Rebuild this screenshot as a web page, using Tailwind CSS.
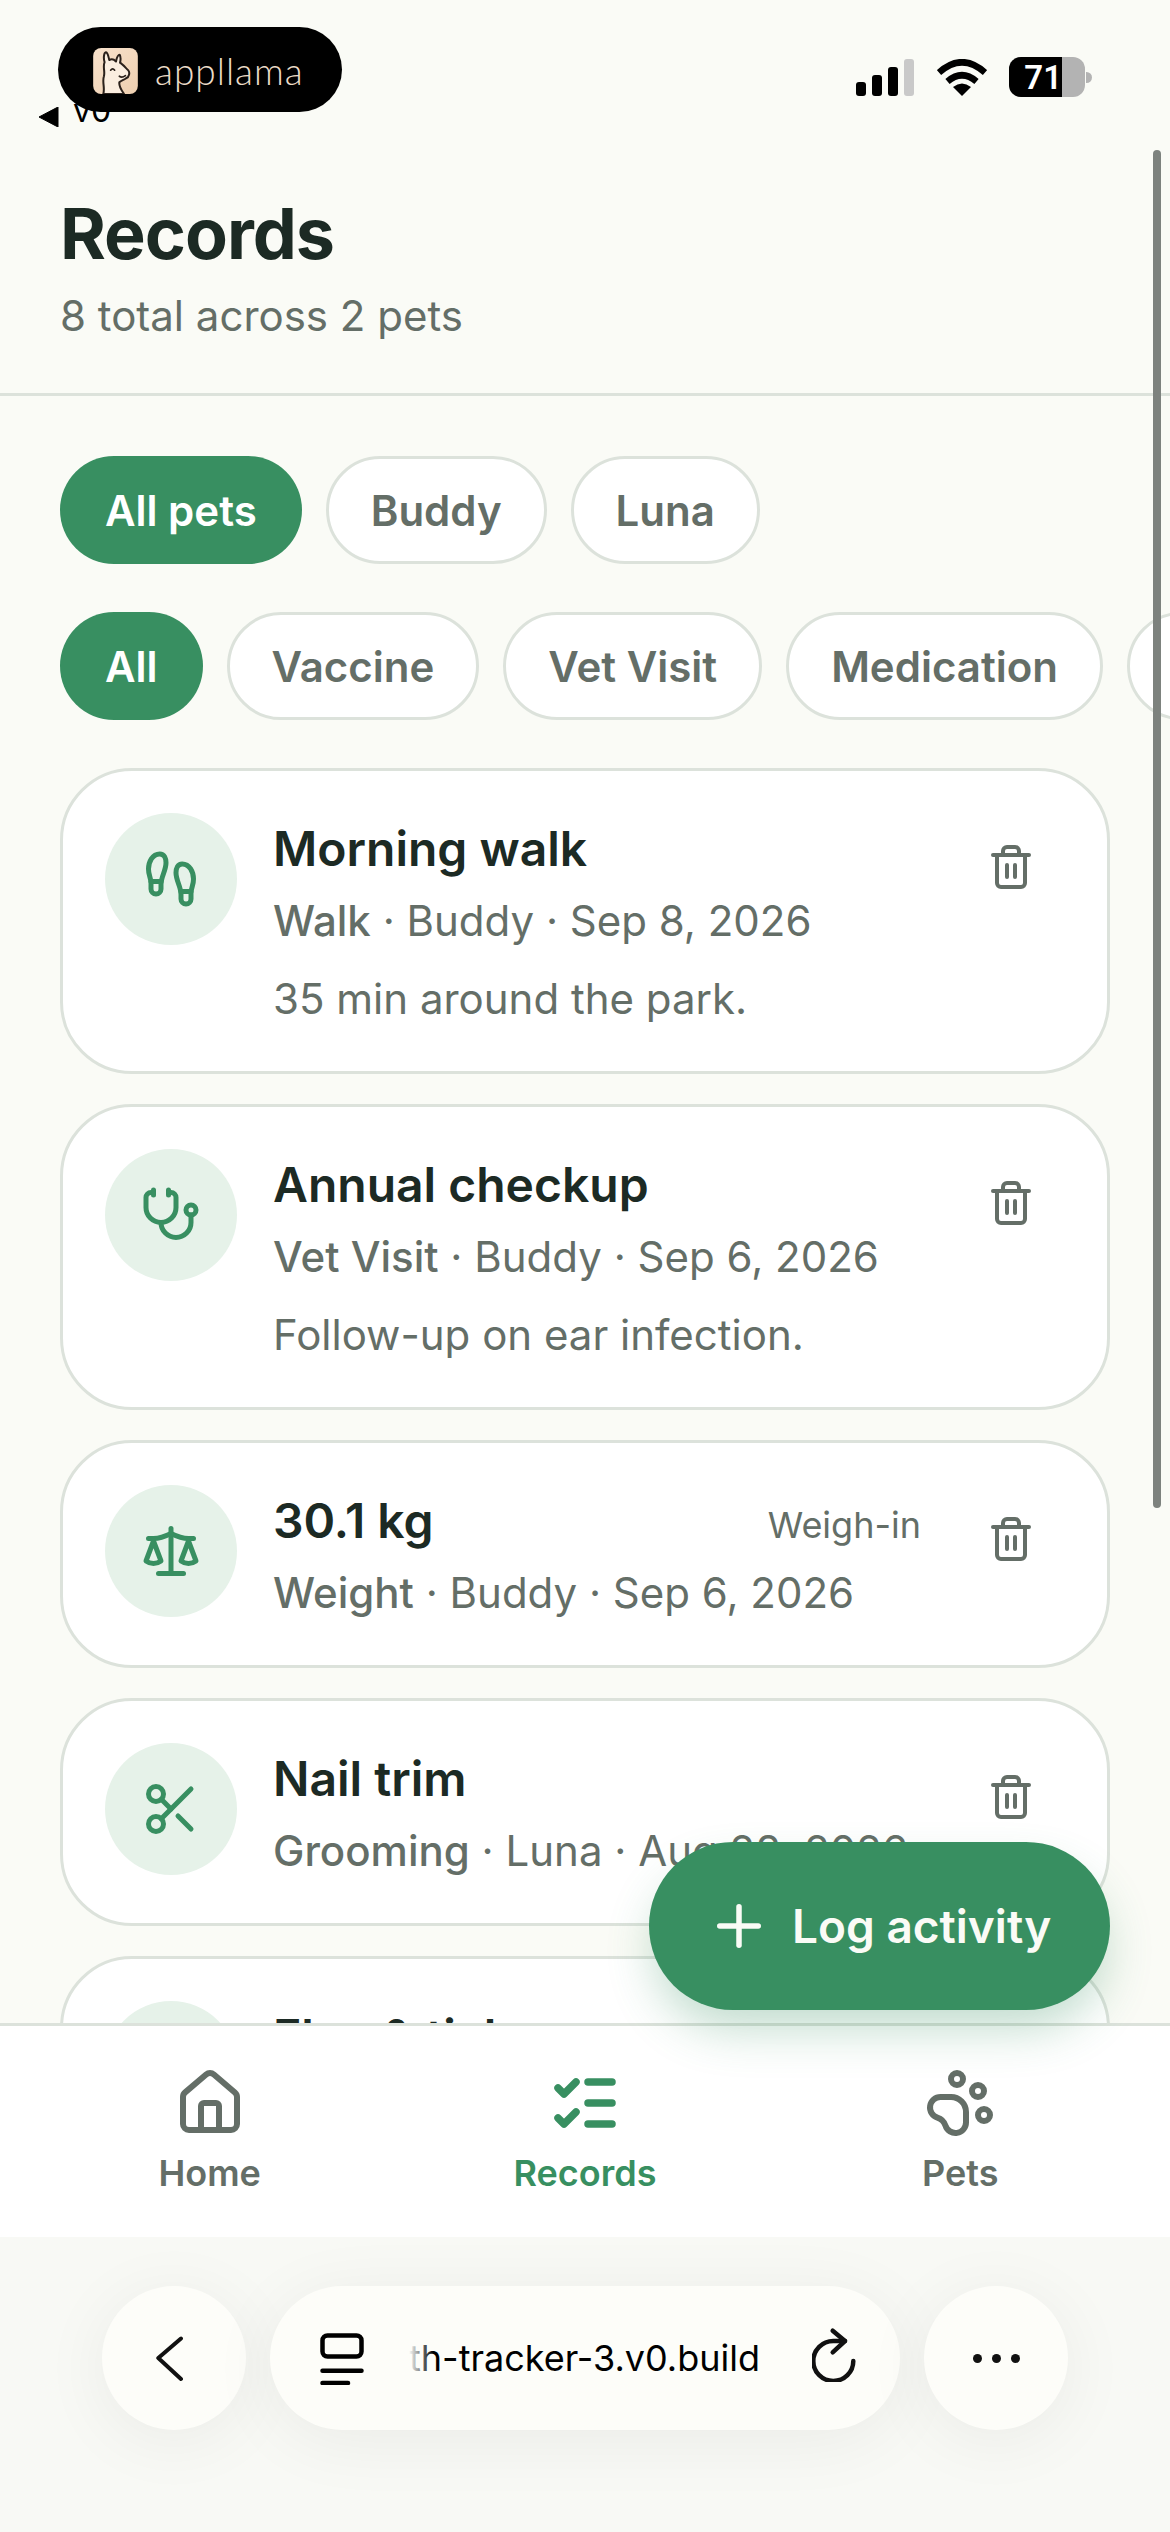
<!DOCTYPE html>
<html lang="en">
<head>
    <meta charset="UTF-8">
    <meta name="viewport" content="width=device-width, initial-scale=1.0">
    <title>Records</title>
    <script src="https://cdn.jsdelivr.net/npm/@tailwindcss/browser@4"></script>
</head>
<body class="bg-[#fafbf6]">

<svg class="hidden">
    <symbol id="trash" viewBox="0 0 24 24" fill="none" stroke="currentColor" stroke-width="2" stroke-linecap="round" stroke-linejoin="round">
        <path d="M3 6h18"/><path d="M19 6v14a2 2 0 0 1-2 2H7a2 2 0 0 1-2-2V6"/><path d="M8 6V4a2 2 0 0 1 2-2h4a2 2 0 0 1 2 2v2"/><path d="M10 11v6"/><path d="M14 11v6"/>
    </symbol>
</svg>

<div class="relative w-[1170px] h-[2532px] overflow-hidden flex flex-col bg-[#fafbf6] font-[Inter,sans-serif] text-[#1c2a24]">

    <!-- Header -->
    <header class="h-[396px] shrink-0 border-b-[3px] border-[#dce2db] flex flex-col">
        <div class="relative flex justify-between items-start pt-[27px] pl-[58px] pr-[78px]">
            <!-- v0 back link, mostly covered by the badge -->
            <div class="absolute left-[38px] top-[90px] flex items-center gap-[14px] text-black">
                <svg class="w-[21px] h-[20px] mt-[12px]" viewBox="0 0 21 20"><path d="M20 0v20L1 10z" fill="currentColor" stroke="currentColor" stroke-linejoin="round"/></svg>
                <span class="text-[32px] leading-[42px]">v0</span>
            </div>
            <!-- appllama badge -->
            <div class="relative w-[284px] h-[85px] rounded-full bg-black flex items-center pl-[35px] gap-[17px]">
                <svg class="w-[45px] h-[46px] mt-[2px]" viewBox="0 0 133 137">
                    <defs><linearGradient id="peach" x1="0" y1="0" x2="1" y2="1"><stop offset="0" stop-color="#f8e2cc"/><stop offset="1" stop-color="#eecfb0"/></linearGradient></defs>
                    <rect width="133" height="137" rx="24" fill="url(#peach)"/>
                    <path d="M30 137C36 118 26 102 32 84C36 70 28 56 34 42C30 30 32 14 38 13C44 14 46 28 48 36Q58 30 68 40C70 30 74 20 79 20C82 26 82 36 80 44C85 46 94 56 104 66C110 72 108 86 98 90C90 96 84 96 78 102C76 115 84 125 92 137Z" fill="#fbeee0" stroke="#2b211b" stroke-width="6" stroke-linejoin="round"/>
                    <path d="M52 66Q58 58 64 66M78 84Q86 90 96 82" fill="none" stroke="#2b211b" stroke-width="5" stroke-linecap="round"/>
                </svg>
                <span class="text-[#ecdcc8] text-[37px] leading-none font-[Lato,sans-serif] font-light tracking-[1px] mt-[2px]">appllama</span>
            </div>
            <!-- Status icons -->
            <div class="flex items-center h-[40px] mt-[30px]">
                <div class="flex items-end gap-[6px] h-[37px] mr-[23px]">
                    <span class="w-[10px] h-[14px] rounded-[3px] bg-black"></span>
                    <span class="w-[10px] h-[21px] rounded-[3px] bg-black"></span>
                    <span class="w-[10px] h-[29px] rounded-[3px] bg-black"></span>
                    <span class="w-[10px] h-[37px] rounded-[3px] bg-[#c9c9c9]"></span>
                </div>
                <svg class="w-[50px] h-[37px] mr-[22px]" viewBox="0 0 50 37" fill="none" stroke="black" stroke-width="6.5">
                    <path d="M2 13.5Q25 -7 48 13.5"/><path d="M10.5 22.5Q25 10 39.5 22.5"/><path d="M25 37L16 28Q25 21 34 28Z" fill="black" stroke="none"/>
                </svg>
                <div class="flex w-[76px] h-[40px] rounded-[12px] overflow-hidden bg-[#b3b3b3]">
                    <div class="w-[53px] bg-black flex justify-end items-center overflow-hidden">
                        <span class="text-white text-[33px] font-semibold leading-none font-[Roboto,sans-serif]">71</span>
                    </div>
                </div>
                <span class="w-[6px] h-[11px] rounded-r-full bg-[#b3b3b3] ml-[1px]"></span>
            </div>
        </div>
        <h1 class="mt-[77px] pl-[60px] text-[70px] leading-[90px] font-bold tracking-[-1px]">Records</h1>
        <p class="mt-[5px] pl-[60px] text-[42px] leading-[63px] text-[#646e67]">8 total across 2 pets</p>
    </header>

    <!-- Scrolling records -->
    <main class="flex-1 min-h-0 overflow-hidden pt-[60px] flex flex-col">
        <div class="flex gap-[24px] pl-[60px] text-[42px] font-semibold shrink-0">
            <span class="h-[108px] px-[45px] rounded-full bg-[#388f61] text-white flex items-center">All pets</span>
            <span class="h-[108px] px-[42px] rounded-full bg-white border-[3px] border-[#dce2db] text-[#646e67] flex items-center">Buddy</span>
            <span class="h-[108px] px-[42px] rounded-full bg-white border-[3px] border-[#dce2db] text-[#646e67] flex items-center">Luna</span>
        </div>
        <div class="flex gap-[24px] pl-[60px] mt-[48px] text-[42px] font-semibold shrink-0 overflow-hidden">
            <span class="h-[108px] px-[45px] rounded-full bg-[#388f61] text-white flex items-center shrink-0">All</span>
            <span class="h-[108px] px-[42px] rounded-full bg-white border-[3px] border-[#dce2db] text-[#646e67] flex items-center shrink-0">Vaccine</span>
            <span class="h-[108px] px-[42px] rounded-full bg-white border-[3px] border-[#dce2db] text-[#646e67] flex items-center shrink-0">Vet Visit</span>
            <span class="h-[108px] px-[42px] rounded-full bg-white border-[3px] border-[#dce2db] text-[#646e67] flex items-center shrink-0">Medication</span>
            <span class="h-[108px] w-[240px] rounded-full bg-white border-[3px] border-[#dce2db] shrink-0"></span>
        </div>

        <div class="flex flex-col gap-[30px] mt-[48px] mx-[60px]">
            <!-- Morning walk -->
            <article class="shrink-0 flex gap-[36px] p-[42px] rounded-[72px] bg-white border-[3px] border-[#dce2db]">
                <div class="w-[132px] h-[132px] shrink-0 rounded-full bg-[#e6f2e9] text-[#388f61] flex items-center justify-center">
                    <svg class="w-[60px] h-[60px]" viewBox="0 0 24 24" fill="none" stroke="currentColor" stroke-width="2" stroke-linecap="round" stroke-linejoin="round"><path d="M4 16v-2.38C4 11.5 2.97 10.5 3 8c.03-2.72 1.49-6 4.5-6C9.37 2 10 3.8 10 5.5c0 3.11-2 5.66-2 8.68V16a2 2 0 1 1-4 0Z"/><path d="M20 20v-2.38c0-2.12 1.03-3.12 1-5.62-.03-2.72-1.49-6-4.5-6C14.63 6 14 7.8 14 9.5c0 3.11 2 5.66 2 8.68V20a2 2 0 1 0 4 0Z"/><path d="M16 17h4"/><path d="M4 13h4"/></svg>
                </div>
                <div class="flex-1 min-w-0">
                    <h2 class="text-[48px] leading-[72px] font-semibold">Morning walk</h2>
                    <p class="text-[42px] leading-[72px] text-[#646e67]"><span class="font-medium">Walk</span> · Buddy · Sep 8, 2026</p>
                    <p class="mt-[12px] text-[42px] leading-[60px] text-[#646e67]">35 min around the park.</p>
                </div>
                <button class="w-[108px] h-[108px] shrink-0 flex items-center justify-center text-[#646e67]"><svg class="w-[48px] h-[48px]"><use href="#trash"/></svg></button>
            </article>
            <!-- Annual checkup -->
            <article class="shrink-0 flex gap-[36px] p-[42px] rounded-[72px] bg-white border-[3px] border-[#dce2db]">
                <div class="w-[132px] h-[132px] shrink-0 rounded-full bg-[#e6f2e9] text-[#388f61] flex items-center justify-center">
                    <svg class="w-[60px] h-[60px]" viewBox="0 0 24 24" fill="none" stroke="currentColor" stroke-width="2" stroke-linecap="round" stroke-linejoin="round"><path d="M11 2v2"/><path d="M5 2v2"/><path d="M5 3H4a2 2 0 0 0-2 2v4a6 6 0 0 0 12 0V5a2 2 0 0 0-2-2h-1"/><path d="M8 15a6 6 0 0 0 12 0v-3"/><circle cx="20" cy="10" r="2"/></svg>
                </div>
                <div class="flex-1 min-w-0">
                    <h2 class="text-[48px] leading-[72px] font-semibold">Annual checkup</h2>
                    <p class="text-[42px] leading-[72px] text-[#646e67]"><span class="font-medium">Vet Visit</span> · Buddy · Sep 6, 2026</p>
                    <p class="mt-[12px] text-[42px] leading-[60px] text-[#646e67]">Follow-up on ear infection.</p>
                </div>
                <button class="w-[108px] h-[108px] shrink-0 flex items-center justify-center text-[#646e67]"><svg class="w-[48px] h-[48px]"><use href="#trash"/></svg></button>
            </article>
            <!-- Weight -->
            <article class="shrink-0 flex gap-[36px] p-[42px] rounded-[72px] bg-white border-[3px] border-[#dce2db]">
                <div class="w-[132px] h-[132px] shrink-0 rounded-full bg-[#e6f2e9] text-[#388f61] flex items-center justify-center">
                    <svg class="w-[60px] h-[60px]" viewBox="0 0 24 24" fill="none" stroke="currentColor" stroke-width="2" stroke-linecap="round" stroke-linejoin="round"><path d="m16 16 3-8 3 8c-.87.65-1.92 1-3 1s-2.13-.35-3-1Z"/><path d="m2 16 3-8 3 8c-.87.65-1.92 1-3 1s-2.13-.35-3-1Z"/><path d="M7 21h10"/><path d="M12 3v18"/><path d="M3 7h2c2 0 5-1 7-2 2 1 5 2 7 2h2"/></svg>
                </div>
                <div class="flex-1 min-w-0">
                    <div class="flex justify-between items-baseline">
                        <h2 class="text-[48px] leading-[72px] font-semibold">30.1 kg</h2>
                        <span class="text-[36px] text-[#646e67]">Weigh-in</span>
                    </div>
                    <p class="h-[66px] text-[42px] leading-[72px] text-[#646e67]"><span class="font-medium">Weight</span> · Buddy · Sep 6, 2026</p>
                </div>
                <button class="w-[108px] h-[108px] shrink-0 flex items-center justify-center text-[#646e67]"><svg class="w-[48px] h-[48px]"><use href="#trash"/></svg></button>
            </article>
            <!-- Nail trim -->
            <article class="shrink-0 flex gap-[36px] p-[42px] rounded-[72px] bg-white border-[3px] border-[#dce2db]">
                <div class="w-[132px] h-[132px] shrink-0 rounded-full bg-[#e6f2e9] text-[#388f61] flex items-center justify-center">
                    <svg class="w-[60px] h-[60px]" viewBox="0 0 24 24" fill="none" stroke="currentColor" stroke-width="2" stroke-linecap="round" stroke-linejoin="round"><circle cx="6" cy="6" r="3"/><path d="M8.12 8.12 12 12"/><path d="M20 4 8.12 15.88"/><circle cx="6" cy="18" r="3"/><path d="M14.8 14.8 20 20"/></svg>
                </div>
                <div class="flex-1 min-w-0">
                    <h2 class="text-[48px] leading-[72px] font-semibold">Nail trim</h2>
                    <p class="h-[66px] text-[42px] leading-[72px] text-[#646e67] whitespace-nowrap"><span class="font-medium">Grooming</span> · Luna · Aug 28, 2026</p>
                </div>
                <button class="w-[108px] h-[108px] shrink-0 flex items-center justify-center text-[#646e67]"><svg class="w-[48px] h-[48px]"><use href="#trash"/></svg></button>
            </article>
            <!-- Flea & tick, cut off by the nav -->
            <article class="shrink-0 flex gap-[36px] p-[42px] rounded-[72px] bg-white border-[3px] border-[#dce2db]">
                <div class="w-[132px] h-[132px] shrink-0 rounded-full bg-[#e6f2e9]"></div>
                <div class="flex-1 min-w-0">
                    <h2 class="text-[48px] leading-[72px] font-semibold">Flea &amp; tick</h2>
                </div>
            </article>
        </div>
    </main>

    <!-- Bottom nav -->
    <nav class="h-[214px] shrink-0 bg-white border-t-[3px] border-[#dce2db] grid grid-cols-3 px-[22px] pt-[41px] text-[36px] font-semibold text-[#646e67]">
        <div class="flex flex-col items-center">
            <svg class="w-[72px] h-[72px]" viewBox="0 0 24 24" fill="none" stroke="currentColor" stroke-width="2" stroke-linecap="round" stroke-linejoin="round"><path d="M15 21v-8a1 1 0 0 0-1-1h-4a1 1 0 0 0-1 1v8"/><path d="M3 10a2 2 0 0 1 .709-1.528l7-5.999a2 2 0 0 1 2.582 0l7 5.999A2 2 0 0 1 21 10v9a2 2 0 0 1-2 2H5a2 2 0 0 1-2-2z"/></svg>
            <span class="mt-[7px] leading-[54px]">Home</span>
        </div>
        <div class="flex flex-col items-center text-[#388f61]">
            <svg class="w-[72px] h-[72px]" viewBox="0 0 24 24" fill="none" stroke="currentColor" stroke-width="2.5" stroke-linecap="round" stroke-linejoin="round"><path d="M13 5h8"/><path d="M13 12h8"/><path d="M13 19h8"/><path d="m3 17 2 2 4-4"/><path d="m3 7 2 2 4-4"/></svg>
            <span class="mt-[7px] leading-[54px]">Records</span>
        </div>
        <div class="flex flex-col items-center">
            <svg class="w-[72px] h-[72px]" viewBox="0 0 24 24" fill="none" stroke="currentColor" stroke-width="2" stroke-linecap="round" stroke-linejoin="round"><circle cx="11" cy="4" r="2"/><circle cx="18" cy="8" r="2"/><circle cx="20" cy="16" r="2"/><path d="M9 10a5 5 0 0 1 5 5v3.5a3.5 3.5 0 0 1-6.84 1.045Q6.52 17.48 4.46 16.84A3.5 3.5 0 0 1 5.5 10Z"/></svg>
            <span class="mt-[7px] leading-[54px]">Pets</span>
        </div>
    </nav>

    <!-- Browser toolbar -->
    <div class="h-[295px] shrink-0 bg-[#f8f9f5] flex gap-[24px] pl-[102px] pt-[49px] text-[#111]">
        <button class="w-[144px] h-[144px] rounded-full bg-[#fdfdf9] shadow-[0_10px_70px_rgba(0,0,0,0.06)] flex items-center justify-center">
            <svg class="w-[30px] h-[48px] mr-[6px]" viewBox="0 0 30 48" fill="none" stroke="currentColor" stroke-width="4" stroke-linecap="round" stroke-linejoin="round"><path d="M25 4.500 2.300 24 25 45"/></svg>
        </button>
        <div class="w-[630px] h-[144px] rounded-full bg-[#fdfdf9] shadow-[0_10px_70px_rgba(0,0,0,0.06)] flex items-center pl-[49px] pr-[40px]">
            <svg class="w-[46px] h-[54px] shrink-0" viewBox="0 0 46 54" fill="none" stroke="black" stroke-width="4.500" stroke-linecap="round"><rect x="3.500" y="4.500" width="39" height="21" rx="5"/><path d="M3.500 39.700h39"/><path d="M3.500 52h25.500"/></svg>
            <div class="relative w-[351px] ml-[44px] overflow-hidden flex justify-end">
                <span class="text-[36px] leading-[54px] whitespace-nowrap text-black">pet-health-tracker-3.v0.build</span>
                <span class="absolute left-0 top-0 w-[24px] h-full bg-gradient-to-r from-[#fdfdf9] to-transparent"></span>
            </div>
            <svg class="w-[48px] h-[56px] ml-auto mb-[8px] shrink-0" viewBox="0 0 48 56" fill="none" stroke="#111" stroke-width="4.500" stroke-linecap="round" stroke-linejoin="round"><path d="M33 15H21.300A20 20 0 1 0 41.300 35"/><path d="M20.700 4.700 33 15 20.700 26.300"/></svg>
        </div>
        <button class="w-[144px] h-[144px] rounded-full bg-[#fdfdf9] shadow-[0_10px_70px_rgba(0,0,0,0.06)] flex items-center justify-center gap-[10px]">
            <span class="w-[9px] h-[9px] rounded-full bg-[#111]"></span>
            <span class="w-[9px] h-[9px] rounded-full bg-[#111]"></span>
            <span class="w-[9px] h-[9px] rounded-full bg-[#111]"></span>
        </button>
    </div>

    <!-- Log activity button -->
    <button class="absolute left-[649px] top-[1842px] h-[168px] w-[461px] rounded-full bg-[#388f61] text-[#fafbf6] flex items-center pl-[57px] gap-[20px] text-[46px] font-semibold shadow-[0_24px_48px_-6px_rgba(56,143,97,0.32)]">
        <svg class="w-[66px] h-[66px]" viewBox="0 0 24 24" fill="none" stroke="currentColor" stroke-width="2" stroke-linecap="round" stroke-linejoin="round"><path d="M5 12h14"/><path d="M12 5v14"/></svg>
        Log activity
    </button>

    <!-- Scrollbar -->
    <div class="absolute left-[1153px] top-[150px] w-[8px] h-[1358px] rounded-full bg-[#7d827e]"></div>
</div>

</body>
</html>
